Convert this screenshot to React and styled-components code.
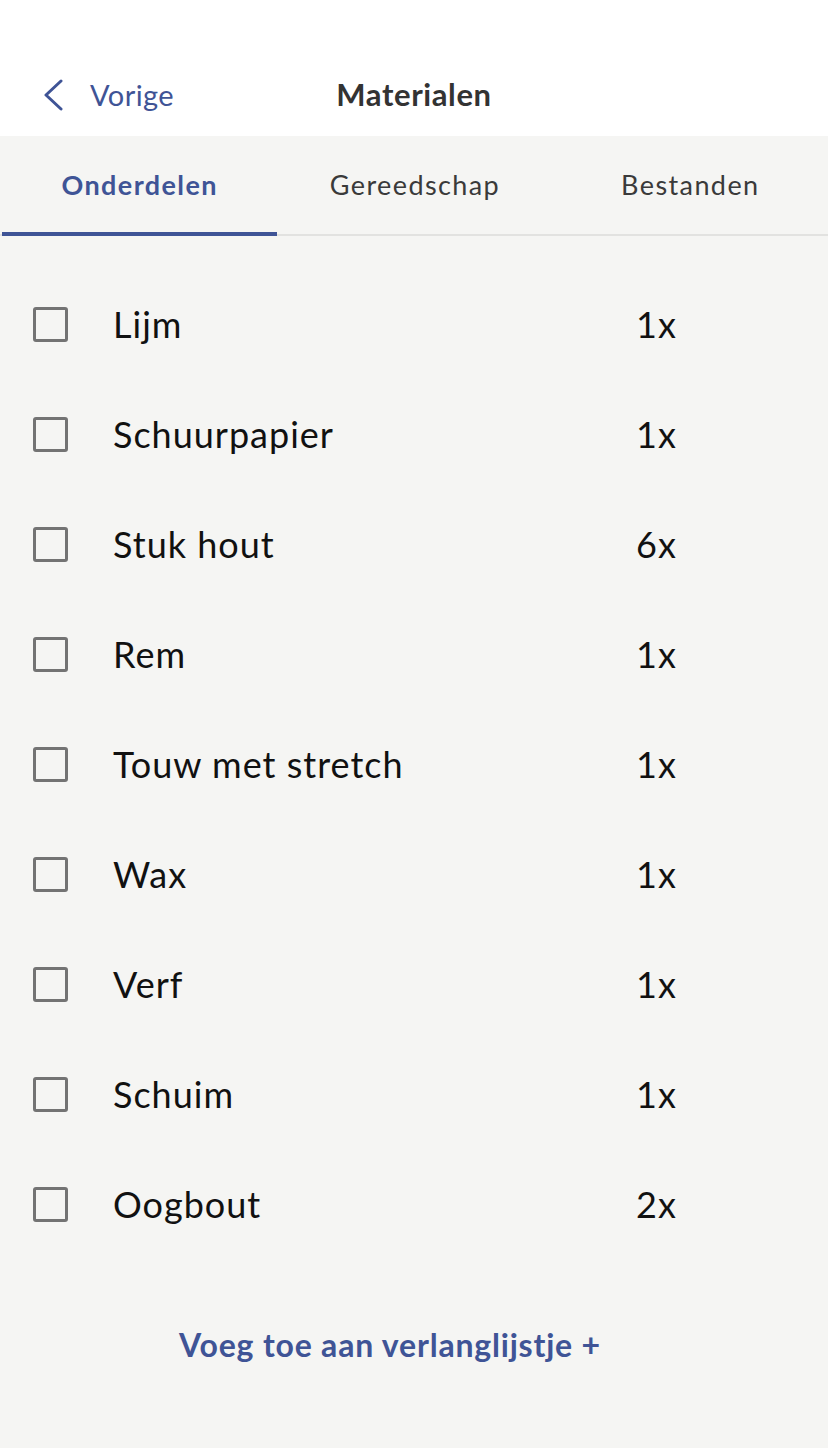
import React, { useState } from "react";
import styled, { createGlobalStyle } from "styled-components";

const GlobalStyle = createGlobalStyle`
  html, body {
    margin: 0;
    padding: 0;
    background: #f5f5f3;
    font-family: Lato, "Open Sans", sans-serif;
  }
`;

const Page = styled.div`
  width: 828px;
  min-height: 1448px;
  background: #f5f5f3;
  display: flex;
  flex-direction: column;
`;

const Header = styled.header`
  height: 136px;
  background: #ffffff;
  display: grid;
  grid-template-columns: 1fr auto 1fr;
  align-items: end;
  padding: 0 0 24px 0;
  box-sizing: border-box;
`;

const BackButton = styled.button`
  display: flex;
  align-items: center;
  gap: 26px;
  background: none;
  border: 0;
  padding: 0 0 0 42px;
  color: #3f5496;
  font-family: inherit;
  font-size: 29px;
  letter-spacing: 0.4px;
  cursor: pointer;
  justify-self: start;
`;

const Title = styled.h1`
  margin: 0;
  font-size: 31px;
  font-weight: 700;
  letter-spacing: 0.6px;
  color: #333333;
  line-height: 36px;
`;

const Tabs = styled.nav`
  display: grid;
  grid-template-columns: repeat(3, 1fr);
  border-bottom: 2px solid #e2e2e0;
  height: 100px;
  box-sizing: border-box;
  padding-left: 2px;
`;

const Tab = styled.button`
  background: none;
  border: 0;
  font-family: inherit;
  font-size: 27px;
  letter-spacing: 1.4px;
  font-weight: ${(p) => (p.active ? 700 : 400)};
  color: ${(p) => (p.active ? "#3f5496" : "#3a3a3a")};
  position: relative;
  padding: 0 0 2px;
  cursor: pointer;

  &::after {
    content: "";
    position: absolute;
    left: 0;
    right: 0;
    bottom: -2px;
    height: 4px;
    background: ${(p) => (p.active ? "#3f5496" : "transparent")};
  }
`;

const List = styled.ul`
  list-style: none;
  margin: 0;
  padding: 33px 0 0;
`;

const Row = styled.li`
  height: 110px;
  display: flex;
  align-items: center;
  padding-left: 33px;
`;

const Box = styled.span`
  width: 35px;
  height: 35px;
  box-sizing: border-box;
  border: 3px solid #737373;
  border-radius: 3px;
  flex-shrink: 0;
  cursor: pointer;
  background: ${(p) => (p.checked ? "#737373" : "transparent")};
`;

const Label = styled.span`
  margin-left: 45px;
  width: 523px;
  font-size: 36px;
  letter-spacing: 1px;
  color: #111111;
`;

const Qty = styled.span`
  font-size: 36px;
  letter-spacing: 1px;
  color: #111111;
`;

const Footer = styled.div`
  display: flex;
  justify-content: center;
  padding: 65px 0 0 0;
`;

const WishButton = styled.button`
  background: none;
  border: 0;
  font-family: inherit;
  font-size: 32px;
  letter-spacing: 0.8px;
  font-weight: 700;
  color: #3f5496;
  cursor: pointer;
  margin-left: -48px;
`;

const items = [
  ["Lijm", "1x"],
  ["Schuurpapier", "1x"],
  ["Stuk hout", "6x"],
  ["Rem", "1x"],
  ["Touw met stretch", "1x"],
  ["Wax", "1x"],
  ["Verf", "1x"],
  ["Schuim", "1x"],
  ["Oogbout", "2x"],
];

const tabs = ["Onderdelen", "Gereedschap", "Bestanden"];

export default function App() {
  const [active, setActive] = useState(0);
  const [checked, setChecked] = useState({});

  return (
    <Page>
      <GlobalStyle />
      <Header>
        <BackButton>
          <svg width="22" height="32" viewBox="0 0 22 32" fill="none">
            <path d="M19 2 L4 16 L19 30" stroke="#3f5496" strokeWidth="3" strokeLinecap="round" strokeLinejoin="round" />
          </svg>
          Vorige
        </BackButton>
        <Title>Materialen</Title>
        <div />
      </Header>
      <Tabs>
        {tabs.map((t, i) => (
          <Tab key={t} active={i === active} onClick={() => setActive(i)}>
            {t}
          </Tab>
        ))}
      </Tabs>
      <List>
        {items.map(([name, qty]) => (
          <Row key={name}>
            <Box
              checked={checked[name]}
              onClick={() => setChecked((c) => ({ ...c, [name]: !c[name] }))}
            />
            <Label>{name}</Label>
            <Qty>{qty}</Qty>
          </Row>
        ))}
      </List>
      <Footer>
        <WishButton>Voeg toe aan verlanglijstje +</WishButton>
      </Footer>
    </Page>
  );
}
